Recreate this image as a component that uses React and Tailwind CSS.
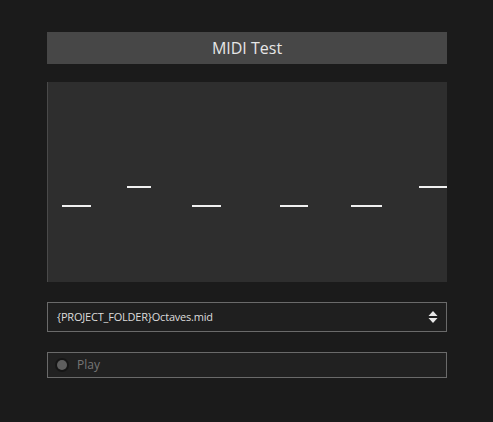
import React from 'react';

// Notes as shown in the piano roll (x/width/top in px relative to the roll)
const notes = [
  { left: 14, width: 29, top: 123 },
  { left: 79, width: 24, top: 104 },
  { left: 144, width: 29, top: 123 },
  { left: 232, width: 28, top: 123 },
  { left: 303, width: 31, top: 123 },
  { left: 371, width: 40, top: 104 },
];

const App = () => {
  return (
    <div
      className="w-[493px] h-[422px] bg-[#1b1b1b] pt-[32px]"
      style={{ fontFamily: '"Open Sans", "Noto Sans", sans-serif' }}
    >
      <div className="ml-[47px] w-[400px]">
        {/* Title bar */}
        <div className="h-[32px] bg-[#474747] flex items-center justify-center text-[16px] text-[#e6e6e6]">
          MIDI Test
        </div>

        {/* Piano roll */}
        <div className="relative mt-[18px] h-[200px] bg-[#2e2e2e] border-l border-[#4a4a4a] overflow-hidden">
          {notes.map((n, i) => (
            <div
              key={i}
              className="absolute h-[2px] bg-[#f0f0f0]"
              style={{ left: n.left, width: n.width, top: n.top }}
            />
          ))}
        </div>

        {/* File select */}
        <div className="mt-[20px] h-[30px] border border-[#6a6a6a] bg-[#1f1f1f] flex items-center pl-[9px] pr-[8px] text-[11px] text-[#dcdcdc] tracking-[-0.2px]">
          <span className="flex-1">{'{PROJECT_FOLDER}Octaves.mid'}</span>
          <svg width="10" height="14" viewBox="0 0 10 14">
            <path d="M5 1 L9.5 6 H0.5 Z" fill="#e8e8e8" />
            <path d="M5 13 L9.5 8 H0.5 Z" fill="#e8e8e8" />
          </svg>
        </div>

        {/* Play toggle */}
        <div className="mt-[20px] h-[26px] border border-[#6a6a6a] bg-[#212121] flex items-center pl-[7px] text-[12px] text-[#777777]">
          <div className="w-[14px] h-[14px] rounded-full bg-[#161616] flex items-center justify-center">
            <div className="w-[10px] h-[10px] rounded-full bg-[#5e5e5e]" />
          </div>
          <span className="ml-[8px]">Play</span>
        </div>
      </div>
    </div>
  );
};

export default App;
